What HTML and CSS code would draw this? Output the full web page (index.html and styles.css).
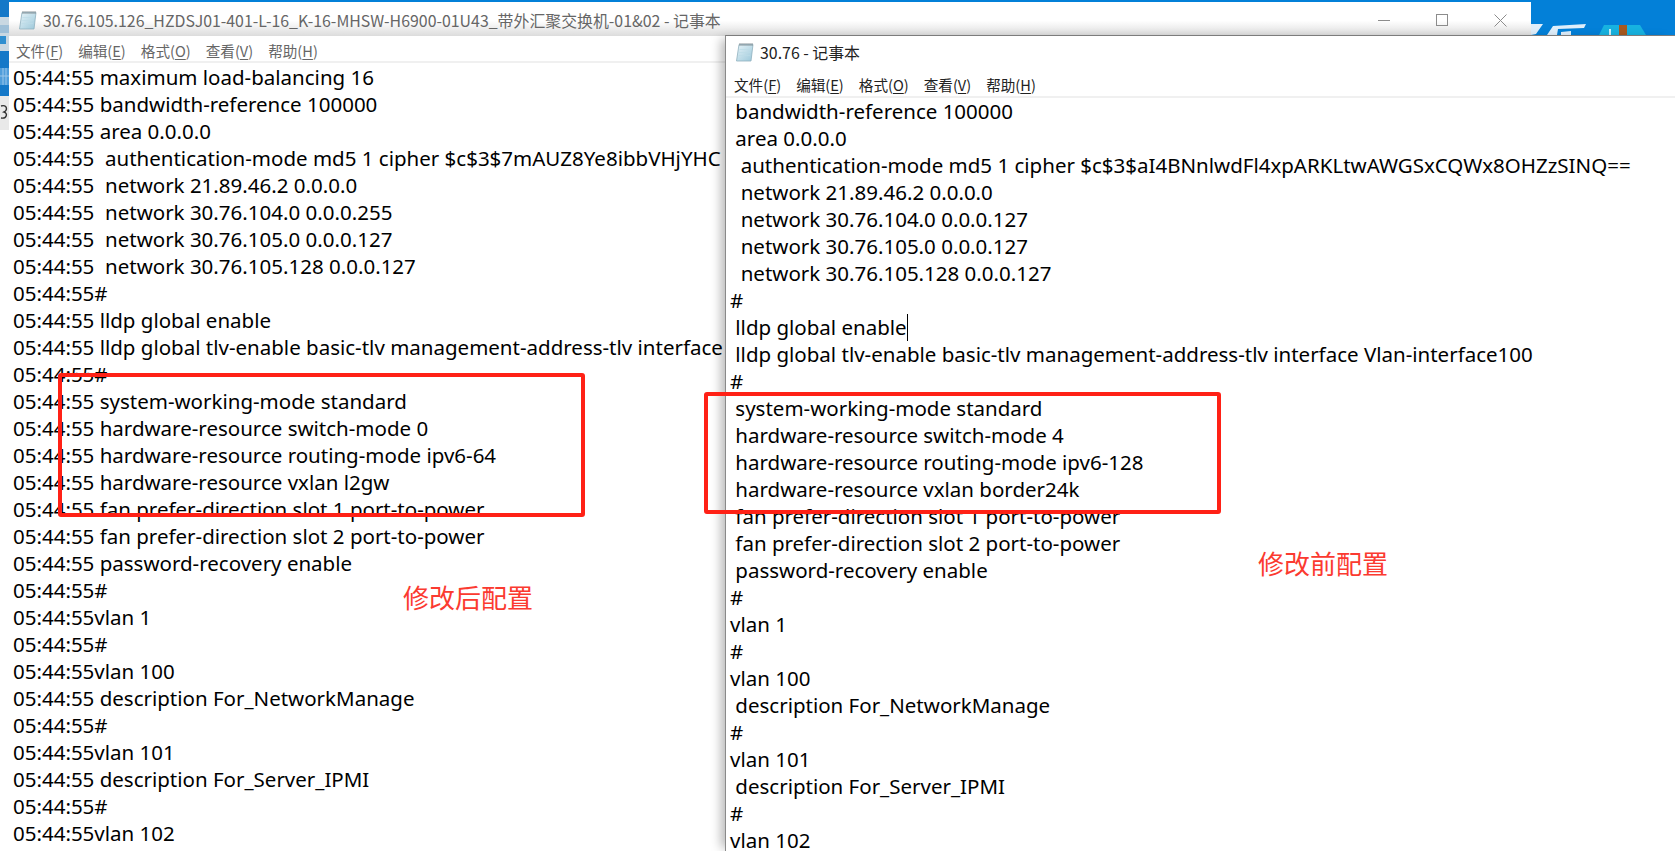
FILE: index.html
```html
<!DOCTYPE html>
<html lang="zh-CN">
<head>
<meta charset="utf-8">
<title>记事本对比</title>
<link rel="stylesheet" href="styles.css">
</head>
<body>
<div class="scene">
  <div class="desktop">
    <svg class="desktop-art" width="144" height="35" viewBox="0 0 144 35">
      <path d="M0 24 L12 24 L5 34 L0 35Z M16 35 L22 26 L55 24 L53 28 L27 29 L26 35Z M30 32 L40 31 L40 35 L30 35Z" fill="#dfeefa"/>
      <path d="M68 35 L73 25 L109 25 L115 35Z" fill="#17b2e0"/>
      <rect x="88" y="25" width="8" height="10" fill="#a8591f"/>
      <rect x="78" y="29" width="2" height="6" fill="#cdeef8"/>
    </svg>
  </div>
  <svg class="left-strip" width="9" height="130" viewBox="0 0 9 130">
    <rect width="9" height="130" fill="#1478c8"/>
    <rect y="17" width="9" height="34" fill="#c9d8e2"/>
    <rect y="25" width="9" height="8" fill="#9fc0d8"/>
    <rect y="36" width="6" height="8" fill="#2f8fd0"/>
    <rect y="68" width="9" height="17" fill="#4f9ddb"/>
    <path d="M3 68V85M6 68V85M0 76H9" stroke="#9cc7ea" stroke-width="1"/>
    <rect y="96" width="9" height="34" fill="#e9e9e9"/>
    <path d="M1 106 C7 104 8 110 4 112 C8 113 7 119 1 118" fill="none" stroke="#333" stroke-width="1.4"/>
  </svg>

  <section class="window window-back">
    <header class="titlebar">
      <svg class="note-icon" width="20" height="20" viewBox="0 0 20 20"><use href="#notepad"/></svg>
      <span class="title-text">30.76.105.126_HZDSJ01-401-L-16_K-16-MHSW-H6900-01U43_带外汇聚交换机-01&amp;02 - 记事本</span>
      <div class="controls">
        <span class="ctl ctl-min"></span>
        <span class="ctl ctl-max"></span>
        <svg class="ctl-close" width="13" height="13" viewBox="0 0 13 13"><path d="M.5.5l12 12M12.500.5l-12 12" stroke="#8c8c8c" stroke-width="1" fill="none"/></svg>
      </div>
    </header>
    <nav class="menubar">
      <span>文件(<u>F</u>)</span><span>编辑(<u>E</u>)</span><span>格式(<u>O</u>)</span><span>查看(<u>V</u>)</span><span>帮助(<u>H</u>)</span>
    </nav>
    <pre class="doc">05:44:55 maximum load-balancing 16
05:44:55 bandwidth-reference 100000
05:44:55 area 0.0.0.0
05:44:55  authentication-mode md5 1 cipher $c$3$7mAUZ8Ye8ibbVHjYHC
05:44:55  network 21.89.46.2 0.0.0.0
05:44:55  network 30.76.104.0 0.0.0.255
05:44:55  network 30.76.105.0 0.0.0.127
05:44:55  network 30.76.105.128 0.0.0.127
05:44:55#
05:44:55 lldp global enable
05:44:55 lldp global tlv-enable basic-tlv management-address-tlv interface
05:44:55#
05:44:55 system-working-mode standard
05:44:55 hardware-resource switch-mode 0
05:44:55 hardware-resource routing-mode ipv6-64
05:44:55 hardware-resource vxlan l2gw
05:44:55 fan prefer-direction slot 1 port-to-power
05:44:55 fan prefer-direction slot 2 port-to-power
05:44:55 password-recovery enable
05:44:55#
05:44:55vlan 1
05:44:55#
05:44:55vlan 100
05:44:55 description For_NetworkManage
05:44:55#
05:44:55vlan 101
05:44:55 description For_Server_IPMI
05:44:55#
05:44:55vlan 102</pre>
  </section>

  <div class="mark mark-after"></div>
  <div class="note note-after">修改后配置</div>

  <section class="window window-front">
    <header class="titlebar">
      <svg class="note-icon" width="20" height="20" viewBox="0 0 20 20"><use href="#notepad"/></svg>
      <span class="title-text">30.76 - 记事本</span>
    </header>
    <nav class="menubar">
      <span>文件(<u>F</u>)</span><span>编辑(<u>E</u>)</span><span>格式(<u>O</u>)</span><span>查看(<u>V</u>)</span><span>帮助(<u>H</u>)</span>
    </nav>
    <pre class="doc"> bandwidth-reference 100000
 area 0.0.0.0
  authentication-mode md5 1 cipher $c$3$aI4BNnlwdFl4xpARKLtwAWGSxCQWx8OHZzSINQ==
  network 21.89.46.2 0.0.0.0
  network 30.76.104.0 0.0.0.127
  network 30.76.105.0 0.0.0.127
  network 30.76.105.128 0.0.0.127
#
 lldp global enable<i class="caret"></i>
 lldp global tlv-enable basic-tlv management-address-tlv interface Vlan-interface100
#
 system-working-mode standard
 hardware-resource switch-mode 4
 hardware-resource routing-mode ipv6-128
 hardware-resource vxlan border24k
 fan prefer-direction slot 1 port-to-power
 fan prefer-direction slot 2 port-to-power
 password-recovery enable
#
vlan 1
#
vlan 100
 description For_NetworkManage
#
vlan 101
 description For_Server_IPMI
#
vlan 102</pre>
  </section>

  <div class="mark mark-before"></div>
  <div class="note note-before">修改前配置</div>

  <svg class="defs" width="0" height="0">
    <defs>
      <linearGradient id="page" x1="0" y1="0" x2="1" y2="1">
        <stop offset="0" stop-color="#e6f3f8"/>
        <stop offset="1" stop-color="#9cc8da"/>
      </linearGradient>
      <g id="notepad">
        <path d="M4 2.500H18L16 19H1.500Z" fill="url(#page)" stroke="#8fb0be" stroke-width=".8"/>
        <path d="M5 1v3M7 1v3M9 1v3M11 1v3M13 1v3M15 1v3M17 1v3" stroke="#808a90" stroke-width=".9"/>
        <path d="M4.500 7.500H16M4.200 10.500H15.600M3.800 13.500H15.200" stroke="#bcdbe6" stroke-width=".7"/>
      </g>
    </defs>
  </svg>
</div>
</body>
</html>
```

FILE: styles.css
```css
html, body {
  margin: 0;
  padding: 0;
  background: #fff;
  overflow: hidden;
}

.scene {
  position: relative;
  width: 1675px;
  height: 851px;
  overflow: hidden;
  background: #fff;
}

.desktop {
  height: 35px;
  background: #0380d8;
  border-bottom: 1px solid #39505e;
  display: flex;
  justify-content: flex-end;
  align-items: flex-end;
}

.desktop-art {
  display: block;
}

.left-strip {
  position: absolute;
  left: 0;
  top: 0;
}

.window {
  position: absolute;
  background: #fff;
  display: flex;
  flex-direction: column;
  overflow: hidden;
  font-family: "Noto Sans CJK SC", "Noto Sans", sans-serif;
}

.window-back {
  left: 9px;
  top: 2px;
  width: 1522px;
  height: 849px;
  color: #666;
}

.window-front {
  left: 725px;
  top: 35px;
  width: 950px;
  height: 816px;
  color: #222;
  border-top: 1px solid #7c7c7c;
  border-left: 1px solid #8a8a8a;
  box-shadow: -8px 0 10px -4px rgba(0, 0, 0, .28);
  overflow: visible;
}

.titlebar {
  display: flex;
  align-items: center;
  box-sizing: border-box;
  font-size: 15.9px;
}

.window-back .titlebar {
  height: 34px;
  padding-left: 9px;
  padding-top: 2px;
  background: linear-gradient(#fff 0%, #fff 55%, #dcdcdc 100%);
}

.window-front .titlebar {
  height: 36px;
  padding-left: 9px;
  padding-bottom: 4px;
}

.note-icon {
  flex: none;
  margin-right: 5px;
}

.title-text {
  white-space: nowrap;
}

.controls {
  margin-left: auto;
  display: flex;
  align-items: center;
  height: 100%;
}

.ctl {
  display: block;
  box-sizing: border-box;
}

.ctl-min {
  width: 12px;
  height: 1px;
  background: #8c8c8c;
  margin-right: 46px;
}

.ctl-max {
  width: 12px;
  height: 12px;
  border: 1px solid #8c8c8c;
  margin-right: 46px;
}

.ctl-close {
  display: block;
  margin-right: 24px;
}

.menubar {
  display: flex;
  align-items: center;
  gap: 15px;
  box-sizing: border-box;
  font-size: 14.6px;
  white-space: nowrap;
}

.menubar u {
  text-underline-offset: 2px;
}

.window-back .menubar {
  height: 27px;
  padding-left: 7px;
  padding-top: 4px;
  border-bottom: 2px solid #f0f0f0;
}

.window-front .menubar {
  height: 26px;
  padding-left: 8px;
  border-bottom: 2px solid #f0f0f0;
}

.doc {
  margin: 0;
  flex: 1;
  overflow: hidden;
  font-family: "Noto Sans", "Noto Sans CJK SC", sans-serif;
  font-size: 20.5px;
  line-height: 27px;
  color: #000;
  white-space: pre;
}

.window-back .doc {
  padding-left: 4px;
  padding-top: 1px;
}

.window-front .doc {
  padding-left: 4px;
}

.caret {
  display: inline-block;
  width: 1px;
  height: 27px;
  margin-right: -1px;
  vertical-align: top;
  background: #000;
}

.mark {
  position: absolute;
  box-sizing: border-box;
  border: 4px solid #ff2116;
  border-radius: 3px;
}

.mark-after {
  left: 58px;
  top: 373px;
  width: 527px;
  height: 144px;
}

.mark-before {
  left: 704px;
  top: 392px;
  width: 517px;
  height: 122px;
}

.note {
  position: absolute;
  font-family: "Noto Sans CJK SC", sans-serif;
  font-size: 26px;
  line-height: 34px;
  color: #fb3a30;
  white-space: nowrap;
}

.note-after {
  left: 403px;
  top: 580px;
}

.note-before {
  left: 1258px;
  top: 546px;
}

.defs {
  position: absolute;
}
```
